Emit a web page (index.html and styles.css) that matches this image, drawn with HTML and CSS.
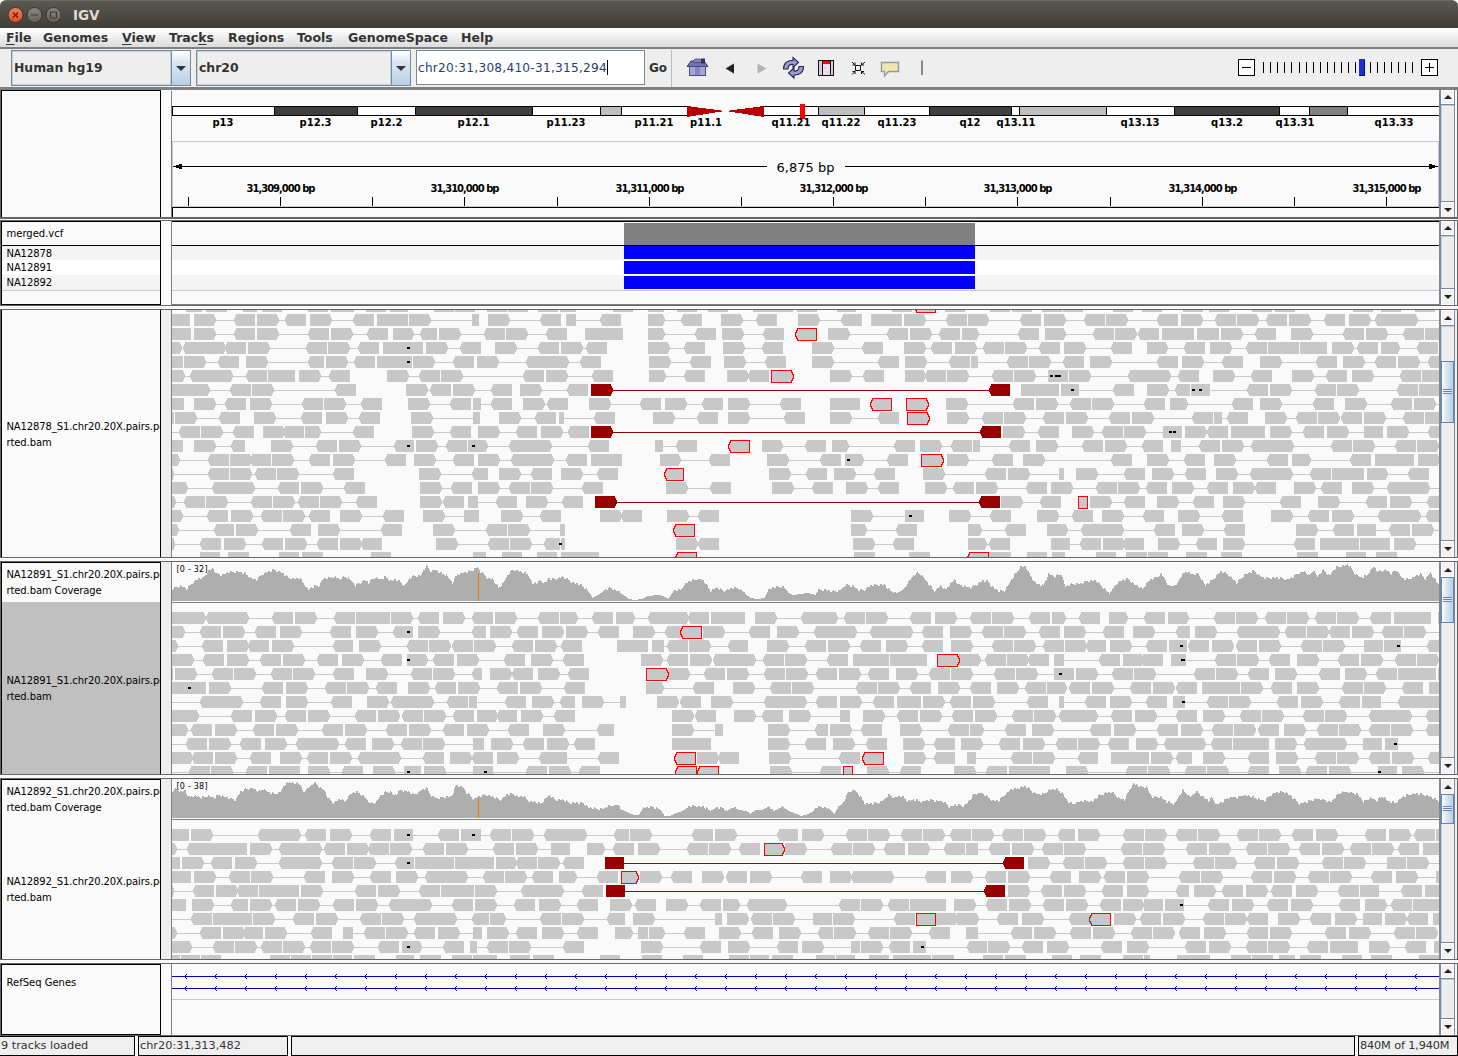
FILE: index.html
```html
<!DOCTYPE html>
<html lang="en">
<head>
<meta charset="utf-8">
<title>IGV</title>
<link rel="stylesheet" href="styles.css">
</head>
<body>
<header class="titlebar">
  <svg class="winbtns" width="60" height="28">
    <defs>
      <linearGradient id="gc" x1="0" y1="0" x2="0" y2="1"><stop offset="0" stop-color="#f48363"/><stop offset="1" stop-color="#df4a16"/></linearGradient>
      <linearGradient id="gg" x1="0" y1="0" x2="0" y2="1"><stop offset="0" stop-color="#8a8880"/><stop offset="1" stop-color="#62615a"/></linearGradient>
    </defs>
    <g stroke="#35342f"><circle cx="15.500" cy="14" r="7.500" fill="url(#gc)"/><circle cx="34.500" cy="14" r="7.500" fill="url(#gg)"/><circle cx="53.500" cy="14" r="7.500" fill="url(#gg)" /></g>
    <path d="M13 11.500l5 5M18 11.500l-5 5" stroke="#5c2413" stroke-width="1.300"/>
    <path d="M31 14h7M50.500 11h6v6h-6z" stroke="#3c3b37" stroke-width="1.200" fill="none"/>
  </svg>
  <span>IGV</span>
</header>
<nav class="menubar">
  <span class="m1"><u>F</u>ile</span><span class="m2">Genomes</span><span class="m3"><u>V</u>iew</span><span class="m4">Trac<u>k</u>s</span><span class="m5">Regions</span><span class="m6">Tools</span><span class="m7">GenomeSpace</span><span>Help</span>
</nav>
<div class="toolbar">
  <div class="combo genome"><span>Human hg19</span><i></i></div>
  <div class="combo chrom"><span>chr20</span><i></i></div>
  <div class="locus">chr20:31,308,410-31,315,294<b></b></div>
  <div class="go">Go</div>
  <svg class="icons" width="250" height="36" viewBox="680 50 250 36">
    <path d="M687 66.500L691 61h13l4 5.500z" fill="#7173ad" stroke="#3a3b70"/>
    <path d="M692 62l3-3h5l5 4z" fill="#8587bd" stroke="#3a3b70" stroke-width=".7"/>
    <rect x="701" y="58.500" width="4" height="5" fill="#33345e"/>
    <rect x="689.500" y="66.500" width="16" height="9" fill="#a3a5d6" stroke="#4a4c86"/>
    <rect x="695" y="67" width="5" height="8" fill="#8486bd"/>
    <path d="M725.500 68.500l8.500-5v10z" fill="#222"/>
    <path d="M766.500 68.500l-9-5v10z" fill="#b4b4b4"/>
    <g fill="#9b9dd2" stroke="#25264f" stroke-width="1.100">
      <path d="M783.500 69c0-6 4-9 9.500-8.500v-3l5.500 5-5.500 5v-3c-3-.5-5 1-5 4.500z"/>
      <path d="M803.500 66.500c0 6-4 9-9.500 8.500v3l-5.500-5 5.500-5v3c3 .5 5-1 5-4.500z"/>
    </g>
    <rect x="818.500" y="60.500" width="15" height="15" fill="#ccd0f2" stroke="#111"/>
    <path d="M822.500 60.500v15M830.500 60.500v15" stroke="#111"/>
    <rect x="823" y="64" width="7" height="11" fill="#f0dde8"/><rect x="823" y="61" width="7" height="3" fill="#f00"/>
    <path d="M820.500 63v3m0 3v3m12-8v3m0 4v3M825 67v2m2 2v2" stroke="#f6b5bb" stroke-width="1"/>
    <path d="M855.500 65.500h5v5h-5zM852 62l3 3m-2.500 0h2.500v-2.500M865 62l-3.500 3m2.500 0h-2.500v-2.500M852 74.500l3-3m-2.500 0h2.500v2.500M865 74.500l-3.500-3m2.500 0h-2.500v2.500" fill="none" stroke="#111"/>
    <path d="M881.500 62.500h17v9h-10l-4 4.500v-4.500h-3z" fill="#efe8ac" stroke="#999" stroke-width="1.400"/>
    <path d="M922 60.500v14.500" stroke="#555" stroke-width="1.300"/>
  </svg>
  <svg class="zoom" width="210" height="36" viewBox="1230 50 210 36" shape-rendering="crispEdges">
    <path d="M1238.500 59.500h16v16h-16zM1421.500 59.500h16v16h-16z" fill="#fff" stroke="#000"/>
    <path d="M1242 67.500h9M1425 67.500h9M1429.500 63v9" stroke="#000"/>
    <g id="zoomticks"></g>
    <rect x="1359" y="59" width="6" height="17" fill="#1a30d0"/><path d="M1364.500 60v15.500h-5" fill="none" stroke="#001080"/>
  </svg>
</div>
<main>
  <section class="panel p1">
    <div class="names"></div>
    <svg class="data" width="1267" height="127" viewBox="172 91 1267 127" id="ruler" shape-rendering="crispEdges"></svg>
    <div class="sb"><i class="up"></i><div></div><i class="dn"></i></div>
  </section>
  <section class="panel p2">
    <div class="names"><div class="vh">merged.vcf</div><div class="vr">NA12878</div><div class="vr w">NA12891</div><div class="vr">NA12892</div><div class="vend"></div></div>
    <svg class="data" width="1267" height="84" viewBox="172 221 1267 84" shape-rendering="crispEdges">
      <rect x="172" y="246" width="1268" height="44" fill="#f4f4f4"/><rect x="172" y="260" width="1268" height="15" fill="#fff"/>
      <path d="M172 221.500h1268M172 245.500h1268" stroke="#000"/><path d="M172 290.500h1268" stroke="#c8c8d2"/><path d="M172 304.500h1268" stroke="#808080"/>
      <rect x="624" y="223" width="351" height="22" fill="#808080"/>
      <path d="M624 246h351v13h-351zM624 261h351v13h-351zM624 276h351v13h-351z" fill="#00f"/>
    </svg>
    <div class="sb"><i class="up"></i><div></div><i class="dn"></i></div>
  </section>
  <section class="panel p3 al">
    <div class="names"><p class="n1">NA12878_S1.chr20.20X.pairs.po<br>rted.bam</p></div>
    <svg class="data" width="1267" height="247" viewBox="172 310 1267 247" id="a1" shape-rendering="crispEdges"></svg>
    <div class="sb"><i class="up"></i><div><em class="t1"></em></div><i class="dn"></i></div>
  </section>
  <section class="panel p4 al">
    <div class="names"><p class="cov">NA12891_S1.chr20.20X.pairs.po<br>rted.bam Coverage</p><p class="sel">NA12891_S1.chr20.20X.pairs.po<br>rted.bam</p></div>
    <svg class="data" width="1267" height="212" viewBox="172 562 1267 212" id="a2" shape-rendering="crispEdges"></svg>
    <div class="sb"><i class="up"></i><div><em class="t2"></em></div><i class="dn"></i></div>
  </section>
  <section class="panel p5 al">
    <div class="names"><p class="cov">NA12892_S1.chr20.20X.pairs.po<br>rted.bam Coverage</p><p class="n3">NA12892_S1.chr20.20X.pairs.po<br>rted.bam</p></div>
    <svg class="data" width="1267" height="180" viewBox="172 779 1267 180" id="a3" shape-rendering="crispEdges"></svg>
    <div class="sb"><i class="up"></i><div><em class="t3"></em></div><i class="dn"></i></div>
  </section>
  <section class="panel p6">
    <div class="names"><p class="ref">RefSeq Genes</p></div>
    <svg class="data" width="1267" height="71" viewBox="172 964 1267 71" id="genes" shape-rendering="crispEdges"></svg>
    <div class="sb"><i class="up"></i><div></div><i class="dn"></i></div>
  </section>
</main>
<footer class="status"><span class="s1">9 tracks loaded</span><span class="s2">chr20:31,313,482</span><span class="s3"></span><span class="s4">840M of 1,940M</span></footer>
<script src="tracks.js"></script>
</body>
</html>
```
FILE: styles.css
```css
* { box-sizing: border-box; }
body { margin: 0; width: 1458px; height: 1056px; overflow: hidden; background: #fafafa; font-family: "DejaVu Sans", sans-serif; color: #333; display: flex; flex-direction: column; }
svg { display: block; flex: none; }
.titlebar { height: 28px; flex: none; display: flex; align-items: center; background: linear-gradient(#5a5850, #3e3d38); border-top: 1px solid #6a6860; border-radius: 6px 6px 0 0; font: bold 13.5px "DejaVu Sans", sans-serif; color: #dfdbd2; }
.titlebar span { margin-left: 13px; }
.menubar { height: 19px; flex: none; display: flex; padding-left: 6px; background: linear-gradient(#fff, #dcdcdc); font-size: 12.5px; font-weight: bold; line-height: 19px; white-space: nowrap; }
.menubar u { text-underline-offset: 2px; }
.m1 { width: 37px; } .m2 { width: 79px; } .m3 { width: 47px; } .m4 { width: 59px; } .m5 { width: 69px; } .m6 { width: 51px; } .m7 { width: 113px; }
.toolbar { height: 43px; flex: none; display: flex; border-top: 2px solid #808080; border-bottom: 3px solid #808080; background: #eee; padding: 1px 18px 0 11px; }
.combo { height: 36px; display: flex; border: 1px solid #7a8a99; font-size: 12.4px; font-weight: bold; }
.combo span { flex: 1; border: 1px solid #b8cfe5; padding-left: 1px; height: 34px; line-height: 32px; }
.combo i { width: 19px; border-left: 1px solid #7a8a99; background: linear-gradient(#fff, #dde8f3 30%, #b8cfe5); display: flex; align-items: center; justify-content: center; }
.combo i::after { content: ""; border: 5px solid transparent; border-top-color: #333; border-bottom: 0; }
.genome { width: 180px; margin-right: 5px; }
.chrom { width: 215px; margin-right: 5px; }
.locus { width: 229px; height: 35px; border: 1px solid #7a8a99; background: #fff; font-size: 12.1px; letter-spacing: .27px; padding-left: 1px; color: #1f3b70; white-space: nowrap; display: flex; align-items: center; }
.locus b { width: 1px; height: 15px; background: #000; }
.go { width: 27px; height: 37px; border-right: 1px solid #bbb; font-size: 12px; font-weight: bold; line-height: 37px; text-align: center; }
.icons { margin-left: 8px; }
.zoom { margin-left: auto; }
main { display: flex; flex-direction: column; gap: 3px; height: 946px; flex: none; font-size: 10px; color: #000; }
.panel { display: grid; grid-template-columns: 160px 11px 1267px 17px; border: 1px solid #666; overflow: hidden; flex: none; background: #fafafa; }
.panel .data { grid-column: 3; box-shadow: -1px 0 #808080; background: #fafafa; }
.panel .names { grid-column: 1; border: 1px solid #000; overflow: hidden; white-space: nowrap; background: #fafafa; }
.panel .sb { grid-column: 4; }
.p1 { height: 129px; margin-bottom: -2px; border-bottom-width: 2px; border-top: 0; padding-top: 1px; }
.p1 .names, .p1 .sb { margin-top: -1px; }
.p2 { height: 86px; }
.p3 { height: 249px; } .p4 { height: 214px; } .p5 { height: 182px; } .p6 { height: 73px; }
.al { background: #eee; }
.al .names { border-bottom: 0; }
.p3 .names { border-top: 0; }
p { margin: 0; padding-left: 4.500px; line-height: 16px; letter-spacing: -.11px; }
.vh { height: 24px; line-height: 24px; padding-left: 4.500px; border-bottom: 1px solid #000; }
.vr { height: 15px; line-height: 16px; padding-left: 4.500px; letter-spacing: -.1px; background: #f4f4f4; }
.vr:nth-child(2) { height: 14px; }
.vr.w { background: #fff; }
.vend { border-top: 1px solid #c8c8c8; }
.n1 { padding-top: 109px; }
.cov { height: 39px; padding-top: 4px; letter-spacing: -.11px; }
.sel { height: 172px; padding-top: 71px; background: #c0c0c0; }
.n3 { padding-top: 55px; }
.ref { padding-top: 10px; letter-spacing: 0; }
.sb { display: flex; flex-direction: column; background: #eee; border: 1px solid #7a8a99; border-width: 0 1px 0 2px; margin-right: 1px; }
.sb i { height: 15px; flex: none; background: #f2f2f2; border: 1px solid #fff; display: flex; align-items: center; justify-content: center; }
.sb i.up { height: 14px; }
.al .sb i.up { height: 15px; }
.sb i.dn { height: 16px; padding-bottom: 1px; }
.sb i::after { content: ""; border: 4.500px solid transparent; }
.sb .up::after { border-bottom-color: #222; border-top: 0; }
.sb .dn::after { border-top-color: #222; border-bottom: 0; }
.sb div { flex: 1; border: solid #7a8a99; border-width: 1px 0; box-shadow: inset 1px 1px #b8cfe5; display: flow-root; }
.sb em { display: block; border: 1px solid #6382bf; background: linear-gradient(90deg, #fff, #dbe6f2 40%, #b8cfe5); position: relative; }
.sb em::after { content: ""; position: absolute; left: 1px; right: 1px; top: calc(50% - 3px); height: 5px; background: repeating-linear-gradient(#6382bf 0 1px, #e8f0f8 1px 2px); }
.t1 { height: 62px; margin-top: 35px; } .t2 { height: 46px; margin-top: -1px; } .t3 { height: 30px; margin-top: -1px; }
.status { height: 20px; flex: none; display: flex; gap: 3px; font-size: 11.300px; line-height: 18px; color: #333; }
.status span { height: 20px; border: 1px solid #000; background: #efefef; padding-left: 1px; white-space: nowrap; overflow: hidden; }
.s1 { width: 136px; margin-left: -1px; } .s2 { width: 150px; } .s3 { width: 1064px; } .s4 { flex: 1; letter-spacing: -.15px; }
svg text { font-family: "DejaVu Sans", sans-serif; font-size: 10px; }
svg .bold { font-weight: bold; text-anchor: middle; }
svg .span { font-size: 13px; text-anchor: middle; }
svg .range { font-size: 8px; }
```
FILE: tracks.js
```js
// Token grammar for a row of reads:
//   r = points right, l = points left, b = both ends, f = flat, s/e = off the left/right edge, k = mismatch
//   "-" joins mates, R = red outline, D = dark red; number is x, ":n" is the width
const rows1 = [
'f186:16 f206:21 f243:14 f262:20 f308:20 f331:23 f366:20 f390:18 f434:20 f455:20 f487:20 f508:20 f538:20 f560:16 f613:20 f648:16 f677:20 f708:20 f753:20 f773:20 f797:20 f837:19 f892:20 Rl914 f945:20 f990:20 f1012:20 f1042:20 f1063:20 f1113:20 f1142:20 f1183:20 f1209:20 f1252:20 f1275:20 f1353:20 f1381:20 f1415:20',
'f172:18 r194-l234 r257-l285 r310-l353 f377:31 r409-f472:7 r488-l540 f566:10-l600 r648:17-l681 r721-l756 r798-l841 f871:31 r904-l946 r968:21-l1020 r1044-l1084 r1106-l1157 r1181-l1215 r1237-l1266 r1289-l1324 r1349-b1375-e',
'f172:19 r194-l234 r257-l308 r331-l367 r393:21-l420:17 r439-l484 r506-l546 f585:38 r648:17-l695 r722-l763 Rl795 r828-l887 r910-l939 r962:17-l1018 r1045:21-l1093 r1115-l1138 f1162:32 f1197:22 r1221-l1255 r1291-l1343 r1366-l1403 f1425:14',
'r172:10 b183 l225 r248-l306 r328-l358 f383:21 f404:19 k407 r426-l460 r495-l538 r561-l586 r648-l684 r723-l762 r812-l862 r904-l931 r955-l983 r1005-l1039 r1064-l1111 r1147:21-l1184 r1210-l1246 f1268:31 f1300:27 r1332-l1357 r1381:19-l1417',
'f172:11 r184-l218 r246-l308:16 r326-l354 f377:35 k407 r413-l453 r477-b526-l580 r649-l690 r724-l765 r812-l878 r905-l949 f971:7-l1007 r1029-l1063 r1090-l1157 r1182-l1222 r1260-l1316 r1343-l1375 r1398-l1428:11',
'r172:13-b190-l246 f268:27 r299-l329 r387-l419 r441-l523 r546-l592 r649:17-l684 r727 l748 Rr771 r830-l863 r905:21 l925 r947-l992 r1014-f1048:20 k1050 k1055:6 r1069-b1128-l1178 r1213-l1251 r1292-l1326 r1352-l1400 f1422:17',
'r172:38-l230 r252-l335 r406-l430 r453-l491 r520-l567 Dr591-Dl989 f1021:38 f1061:18 k1071-l1113 r1147-l1175:15 f1191:19 k1192 k1199-l1247 r1270-l1315 r1337-l1397 f1419:20',
'f172:12 r194-l225 r250-l302 r324-l361 r408-l450 f473:8-l491 r523-l547 r589-l640 r665-l702 r728-l780 f830:30 Rl870 Rr906 r946-l1013 r1036-l1070 r1092-l1144 r1170:18-l1232 r1260-l1313 r1345-l1391 r1414-e',
'f172:2 r175-l219 r254-l301 r326-l359 r411-f473:7 r499-l535 f559:5-l594 r653-l697 r728-l784 r830-l878 Rr907 r947-l982 r1004-l1043 r1066-l1109 r1132-l1192 f1214:8-l1227 r1265-l1296 r1318 l1341 r1364-l1403 f1425:14',
's172-l179 r201-l233 r263 l283 r305:16-l353 r412-l450 r478-l516 r541-l568 Dr591-Dl980 r1003-l1038 r1072-l1102 r1124-f1163:19 k1169 k1173 r1185 l1207 f1231:34 r1270-l1303 r1327-f1364:19 r1387-l1428:11',
'f172:11 r194-l231:14 r271-l316 r339-l394:20 k407 r416-l446 r468:20 k472-b509-l588 f655:8-l676 Rl728 r762:21-l805 r832:17-l894 r920-l951 f973:7-l1009 r1036-l1082 r1105-l1142 f1171:10-l1199 r1222-b1251-l1331 r1353-l1395 r1417',
'r172:8-l208 r230 l250 r272-l309 r333-l385 r414-l453 r478-b511-l566 f591:31 r660:21-l709 r767-l820 r845:19 k847-l887 Rr921 r947-l992 r1023-l1111 r1147-l1184 r1214-l1267 r1292:19-l1350 f1375:39 r1418',
'r172:2-l208 r230-l255 r277-l333 r419-l472:16 r499-l531 r561-l597 Rl664:19 r769-l806 r834-l874 r923-l985 r1008-f1059:5 r1076-l1124 r1152-l1185 r1216-b1250-l1310 f1332:32 r1367:21-l1408',
'r172:16-b212-l278 r301-l344 r420-l451 r478-l509 r531-l582 r666-l710 r772-l812 r846-l878 r925-l953 r976-l1026 r1051-l1096 r1118-l1146 r1172-l1207 r1233 l1255 r1294-l1321 r1352-b1387-e',
'r172:4-l184 r206-l251 r273-l298 r320-l356 r420-l443 f468:10-l496 r526-l562 Dr595-Dl979 r1001-l1040 Rf1078:9 r1090-l1124 r1157-l1193 r1223-l1280 r1318-l1366 r1390-l1427:12',
'r172:11-l207 r231-l261 r283-l309 r340-l383 r423-f464:15 r501-l540 r600 l621 r667-l698 r851-f905:19 k909 r949-l990 r1037-l1072 r1102-l1143 r1178-l1222 r1271-l1308 r1332-b1378-l1426:13',
'r172:7-l214:20 r236-l290 r318-l381 r433-l486 r508-f560:5 Rl673 r851:16-l896 r968:14-l1005 r1047:21-b1081-l1154 r1182-l1224 r1296-l1333 f1357:19-l1389 r1412-e',
'r172:3-l200 r224-l262 r285-l317 r340 l361 r436-l488 r510-l544:16 f561:4 k559 r676 l698 r853-l893 r968:19-l989 f1051:19-l1080 r1103 l1123 r1158-l1196 r1223-l1294 f1320:39 f1360:30 r1394-e',
'f200:20 f228:21 f279:20 f302:21 f371:20 f473:13 f502:20 f537:20 f561:38 Rl675 f854:21 f909:21 Rl967 f989:22 f1027:20 f1052:13 f1096:20 f1126:21 f1148:20 f1186:21 f1221:21 f1297:21 f1346:20 f1376:21'];
const rows2 = [
'r172:34 b206-l272 r295-l334 f356:34 r391-l418 r443-l472 r495-l538 r560:18-l592 r616:19-b648:41 l688 f711:34 r755-b801:37-l844 r866-l910 r935-l970 r992-l1029 r1052:14-l1079 r1109:19-l1144 r1168:21-l1214 r1236-l1265 r1287-l1315 r1337-l1370 f1394:37 f1438:2',
'r172:13-l200 r223-l255 r280-l330 r356-l393:20 k407 r418-l472:14 r490-l517 r542 r566-l598 r633-l665 Rl680 r703-l749 r777-b814-b870-l922 r950-l982 r1004-l1039 r1064-l1103 r1133-l1176:14 r1195-b1237-l1285 r1307 l1329 r1352-l1382 r1404-e',
'r172:6-l202 r227 l248 r272-l333:20 r359-l407 r429 l452 r474-l512 r535-l561 f617:31 f652:12-l667 r689-l728:20 r767-l805 r828-l860 r886-l922 r951-l992 r1014-l1043 r1065 l1086:20 r1110-l1146 f1169:18 k1180 l1188 r1212 l1236 r1259-l1301 r1323-f1364:19 f1384:17 k1397-l1427:12',
'r172:22-l203 r227-l260 r283-l317 r342-l381 r407:21 k407-l433 r457-l504 r531-l563 r641-l667 r690 b713-l763 r785-l827 f853:36 f890:37 Rr937 r959-l985 r1007 l1028 f1054:10-l1099 r1123:21 f1143:20 f1171:15 k1181:4-l1215 r1237-l1269 r1297-l1338 r1361-l1395 r1417',
'f172:1 r175-l212 r234-l271 r293-l333 r366-l411 r433-l472:10 r490 l512 r538-l568 Rr646 r668-l704 r727-l764 r786-l816 r839-l868 r896-l929 r951-l994 r1016-f1054:20 k1059 r1076-l1112 r1134-l1194 r1216-l1248 r1275-l1319 r1345-l1376 f1398:38 f1438:2',
'f172:34 k188 r209-l262 r286-l325 r347-l376 r408-l435 r458-l497 r520-l564 r646:18-l693 r733-l770 r792-l856 r878-l910 r938-l970 r997-l1025 r1047:20 l1069 r1092-l1130 r1153 l1176 f1202:38 r1241-l1271 r1297-l1342 r1364-l1402 f1429:11',
's172-b200-l260 r286-l331 r367-b391-l447 f469:8-l505 r532-l560:15 r582-f620:6 r657 l680 r711-b764-l816 r840-l873 f897:24 r923-l950 r973-l1027 f1059:5-l1085 r1110-l1146 f1173:12 k1182-l1207 r1229-l1277 r1301-l1339 f1362:19-l1398:42',
'r172:27-l231 r255-l285 r308-l355 r378 l402 r424-l453 r477:21 l497:20 r521-l554 r672 l695 r734-l762 r789-f840:10 r863-l897 r920-l952 r975-l1012 r1034-b1059:39-l1111 r1135-l1176 r1203-l1240 r1262-l1303 r1325-b1369-l1426:14',
'r172:16-l191 r215-l253 r276-l322 r345-l386 r409-l443 r467-l508 r543-l597:17 r672-f715:8 r768-l815:13 r830-l861 r900-l948 r970:14-l1005 r1032-l1090 r1114-l1157 r1181-l1212 r1234 l1258 r1284-l1317 r1339-l1369 r1391-l1426:14',
's172-l186 r209-l240 r265-b296-l345 r372-l401 r423-f473:11 r491-l523 r547-l574 f672:39 r768-l805 r833-l866 r903-l934 r961-l999 r1023-l1056 r1078-l1108 r1136-b1164:42-l1211 f1233:36 r1275-b1304-f1363:19 f1385:13 k1394-e',
'r172:21 l192 r215-l250 r280-l307 r330-b358-l423 r450 l472 r497-l539:28-l598 Rl674 r697 l718 r769-l839 Rl862 r904-l934 f967:9-l1011 r1033-l1078:20 f1111:38 r1151-l1176:16 r1203-l1248 r1276-l1315 r1337-l1369 r1392-l1428:11',
's172-l189 r211-l246 f269:31 r308-l342 r373-f404:17 k407 r424-f473:20 k484-l526 r549-l579 Rl675 Rl697 r770-l820 Rf843:9 r867-l900 r954-l986 f1009:41 r1066-l1126 r1148-l1185 r1207-l1248 r1279-l1306 r1329-f1378:19 k1378 r1402-e'];
const rows3 = [
'f172:17 r191-b258-l305 r330-l370 f394:19 k407-l438 f461:20 k472-l490 r512-b544-l614:15 r630-l692 r715-l777 r802-l846 r868-l901 r923-l950 r972-l1002 r1024-l1058:17 r1078-l1123 r1145-l1176 r1198-l1237 r1259-l1292 r1316-l1365 r1389-l1414 f1436:4',
'r172:5-l187:60 r250-b279-l324 r347 l368 r390-l423 r446-l493 r516-f551:19 r587:18-l613 r638-l687 r709-l739 Rr764:20 r785-l831 r853-l884 r908-l944 f966:12-l989 r1012-l1042 r1064-l1121 r1143-l1186 r1209-l1246 r1268-l1299 r1322-l1350 r1372-l1398 f1423:17',
'f172:8 r182-l211 r235-b279-l332 r354-l395:19 k407 f415:39 f455:39 r496:21 l516 r538-l563 Df605:19-Dl1003 r1028-l1063 r1085-l1123 r1145-l1193 r1215-l1254 r1277-l1322 r1344-f1387:19 r1407-e',
'f172:19 r194-l229 r251-l304 r332-l370 r396-b425-l483 r505-l532 r559:18-l597 Rr621:17 r640-l671 r702 l726 r750-l801 r830 l851 r872-l925 r951-l985 r1008-l1050 r1079-l1104 r1127-l1179 r1201-l1251 r1274-l1308 r1330-l1371 r1396-f1436:4',
'r172:2-l193 r216 l237 f259:40 r301-l355 r378-l419 f441:33 r475-b521-l582 Df606:19-Dl984 r1008-l1041 r1064-l1102 r1127-l1176:13 r1194-l1222 r1246-l1271 r1296-l1338 f1360:19-l1401 f1425:15',
'f172:14 r192-l231:17 r250-l275 r298-l333 r356-b389-l452 r475-l514 r539-l577 r610-l635 r666-l700 r723:17-b747:40-l839 r861-l888 f910:36 r954-l986 r1009-l1043 r1066-l1100 r1123:21 f1144:19 f1165:19 k1180-l1208 r1232-l1267 r1291-l1339 r1365-l1391 f1413:27',
's172-l191 f213:39 r253-l293 r316-l360 r382-b414-l472:17 r490:16-l540 r562-l607:18 r633-f715:7 r727 l751 r773-f813:19 r833-l894 Rf916:19 r936 r957-l997 r1022-l1069 Rl1089 r1114-l1140 r1163-l1203 r1225-l1247 r1278-l1310 r1335-f1363:19 r1385 l1407 f1433:7',
'r172:5-l200 r223 l243:20 r265-l311 f343:10-l364 r386-l414 r438-f473:9 r487-l516 r542-l577 r615:18-f638:10 r649:16-l684 r719-l752 r779-l818:15 r834-l868 r890-l929 f966:12-l1011 r1034-l1070 r1093-l1131 r1153 l1179 r1204-l1247 r1270-l1325 r1349-l1394 r1416',
'r172:20-l213 r235-l261 r283-l310 r332-l378 r402:20 k407-l443 f470:7-l487 r509-l563 r641-l700 r728-l777 r802-f851:9 r861-l889 f913:13 k921-l967:20 r988-l1022 r1047-l1101 r1127-l1185 r1209-l1246 r1268-l1307 f1330:28 r1369:21-l1405 f1434:6',
'f172:8 f181:19 f201:20 f270:20 f291:20 f312:20 f333:19 f354:21 f396:18 f420:21 f452:20 f473:24 f510:20 f533:21 f600:20 f642:20 f683:20 f729:20 f750:19 f772:21 f816:19 f836:19 f869:20 f893:38 f932:22 f983:20 f1005:21 f1052:20 f1080:21 f1123:20 f1144:6 f1177:33 f1231:20 f1252:21 f1279:16 f1300:21 f1342:20 f1371:21 f1419:20'];

// Coverage profiles: x, depth in pixels
const cov2 = '172 12 180 15 186 12 192 18 198 22 203 23 208 30 212 32 216 27 222 26 230 29 238 29 245 27 250 23 256 21 262 27 268 29 274 31 280 29 288 23 294 22 299 23 303 18 308 11 313 14 318 15 323 22 328 23 335 24 339 21 344 24 348 23 355 15 360 18 364 21 368 18 375 24 380 21 385 24 390 20 395 21 400 19 404 15 409 22 414 25 420 25 426 35 430 30 434 31 440 28 446 26 452 18 457 27 465 28 471 30 477 34 480 29 484 26 488 22 492 22 498 13 502 17 508 27 512 31 517 30 523 28 528 26 532 17 536 18 540 20 545 18 548 22 555 22 562 24 568 21 573 18 580 16 586 12 592 3 598 6 603 10 610 13 617 10 622 7 628 2 634 1 642 2 648 5 657 6 663 5 668 2 673 10 680 11 685 17 692 21 700 22 704 19 710 10 716 13 723 10 730 12 738 13 745 7 750 3 757 2 764 3 768 11 775 14 783 14 788 8 793 6 800 7 807 8 815 6 818 11 825 11 832 9 840 11 846 16 852 15 858 11 864 11 870 15 877 16 884 16 890 10 897 8 903 11 908 19 914 26 918 28 922 25 928 17 934 10 940 15 945 11 950 17 954 21 958 16 964 15 970 13 976 16 982 20 987 20 992 14 997 10 1004 10 1008 16 1013 24 1020 34 1025 34 1030 25 1036 17 1043 15 1048 27 1054 24 1061 27 1065 14 1073 17 1080 17 1087 20 1095 20 1102 14 1109 7 1114 15 1120 20 1128 22 1133 17 1142 12 1148 20 1155 23 1161 27 1168 15 1176 16 1181 25 1186 30 1192 26 1198 27 1205 15 1212 21 1220 29 1227 27 1236 18 1244 26 1254 30 1262 23 1270 23 1280 23 1287 21 1293 24 1298 28 1304 29 1309 25 1313 31 1317 24 1323 31 1329 25 1335 33 1342 35 1348 36 1353 29 1360 23 1366 25 1373 34 1378 29 1385 31 1391 27 1396 31 1402 22 1408 22 1414 24 1420 27 1425 22 1430 28 1436 19 1440 16';
const cov3 = '172 27 176 29 180 26 185 27 188 21 195 22 201 20 208 22 214 20 219 23 225 21 230 19 235 18 240 26 246 29 252 30 258 26 263 29 268 25 274 24 280 26 284 33 290 36 294 34 298 35 303 26 308 30 314 35 319 31 324 27 328 19 333 15 340 19 344 16 350 24 357 26 363 22 370 14 376 16 380 22 386 26 390 26 394 22 400 28 408 26 413 23 420 27 426 30 431 22 437 19 444 21 451 21 456 33 462 31 466 25 473 19 478 21 486 23 492 21 500 18 506 23 512 24 518 21 523 22 528 17 534 16 540 14 545 19 549 22 555 18 562 18 570 15 576 15 583 15 588 10 596 9 604 9 608 12 617 13 622 8 628 5 634 3 638 3 643 10 650 11 656 10 660 8 664 2 670 2 676 5 682 7 688 11 695 12 703 11 710 7 716 10 722 10 727 7 732 11 738 8 746 7 750 4 755 8 762 8 768 11 773 7 782 11 788 7 796 4 801 2 808 4 812 6 816 11 823 11 830 8 834 4 838 11 843 15 848 26 854 28 859 22 865 14 872 14 878 15 884 18 888 23 894 20 901 22 907 17 915 18 922 16 929 18 936 17 943 16 949 11 956 13 963 12 968 16 974 24 980 25 986 22 992 17 998 17 1004 23 1010 28 1016 29 1021 31 1027 31 1032 26 1038 23 1044 24 1049 28 1055 29 1062 25 1067 16 1072 14 1078 16 1085 17 1092 16 1098 22 1105 25 1111 26 1118 20 1124 18 1130 30 1133 34 1140 31 1146 31 1151 21 1160 21 1166 16 1174 14 1179 22 1182 28 1190 21 1196 26 1203 21 1208 17 1212 20 1216 13 1222 16 1229 21 1237 20 1243 23 1251 21 1258 19 1264 17 1270 23 1278 26 1285 26 1292 20 1299 14 1307 16 1315 19 1323 18 1331 16 1337 23 1342 26 1350 25 1357 24 1363 16 1370 20 1376 17 1382 22 1388 16 1395 15 1401 20 1407 23 1413 24 1420 24 1427 22 1432 20 1440 16';

const widths = { r: 22, l: 21, b: 43, f: 10, s: 0, e: 0, k: 3 };
function shape(t, x, y, w, h) {
  const L = (t === 'l' || t === 'b') ? 2.5 : 0, R = (t === 'r' || t === 'b') ? Math.min(2.5, w / 2) : 0, m = h / 2;
  return `M${x + L} ${y}H${x + w - R}` + (R ? `L${x + w} ${y + m - 1}v2L${x + w - R} ${y + h}` : `V${y + h}`) +
    `H${x + L}` + (L ? `L${x} ${y + m + 1}v-2z` : 'z');
}
function drawReads(rows, y0) {
  let grey = '', dark = '', red = '', black = '', line = '', dline = '';
  rows.forEach((row, i) => {
    const y = y0 + 14 * i;
    let end = 172;
    for (const m of row.matchAll(/(-?)([RD]?)([rlbfsek])(\d*)(?::(\d+))?/g)) {
      const t = m[3], x = t === 'e' ? 1440 : +m[4], w = m[5] ? +m[5] : widths[t];
      if (t === 'k') { black += `M${x} ${y + 5}h${w}v2h-${w}z`; continue; }
      if (m[1]) { const s = `M${end} ${y + 6}H${x}v1H${end}z`; if (m[2] === 'D') dline += s; else line += s; }
      if (w) {
        if (m[2] === 'D') dark += shape(t, x, y, w, 12);
        else if (m[2] === 'R') red += shape(t, x + .5, y + .5, w, 12);
        else grey += shape(t, x, y, w, 12);
      }
      end = x + w;
    }
  });
  return `<path d="${line}" fill="#c8c8c8"/><path d="${dline}" fill="#960000"/><path d="${grey}" fill="#c8c8c8"/><path d="${dark}" fill="#960000"/><path d="${red}" fill="#c8c8c8" stroke="#f00"/><path d="${black}" fill="#000"/>`;
}
function drawCoverage(data, base, label, snp) {
  const v = data.split(' ').map(Number);
  let d = `M172 ${base}`, k = 0;
  for (let x = 172; x < 1440; x++) {
    while (k + 4 < v.length && x >= v[k + 2]) k += 2;
    const f = (x - v[k]) / (v[k + 2] - v[k]);
    const ripple = v[k + 1] > 8 ? [0, .8, -.6, 1.3, .1, -.9, .5][(x >> 1) % 7] : 0;
    d += `V${base - Math.max(1, Math.round(v[k + 1] + f * (v[k + 3] - v[k + 1]) + ripple))}h1`;
  }
  return `<path d="${d}V${base}z" fill="#aeaeae"/><rect x="478" y="${base - snp}" width="1" height="${snp}" fill="#e08000"/>` +
    `<path d="M172 ${base + 1.5}h1268" stroke="#808080"/><text class="range" x="176.500" y="${base - 29}" textLength="31">${label}</text>`;
}
const $ = id => document.getElementById(id);
$('a1').innerHTML = drawReads(rows1, 300);
$('a2').innerHTML = drawReads(rows2, 612) + drawCoverage(cov2, 601, '[0 - 32]', 28);
$('a3').innerHTML = drawReads(rows3, 829) + drawCoverage(cov3, 818, '[0 - 38]', 20);

// Ideogram and ruler
const bands = [[172,274,'#fff'],[274,357,'#3f3f3f'],[357,415,'#fff'],[415,532,'#3f3f3f'],[532,600,'#fff'],[600,621,'#bfbfbf'],[621,687,'#fff'],[763,818,'#fff'],[818,864,'#bfbfbf'],[864,929,'#fff'],[929,1011,'#3f3f3f'],[1011,1019,'#fff'],[1019,1106,'#bfbfbf'],[1106,1174,'#fff'],[1174,1279,'#3f3f3f'],[1279,1309,'#fff'],[1309,1347,'#808080'],[1347,1441,'#fff']];
const bandNames = [[223,'p13'],[315.500,'p12.3'],[386.500,'p12.2'],[473.500,'p12.1'],[566,'p11.23'],[654,'p11.21'],[706,'p11.1'],[791,'q11.21'],[841,'q11.22'],[897,'q11.23'],[970,'q12'],[1016,'q13.11'],[1140,'q13.13'],[1227,'q13.2'],[1295,'q13.31'],[1394,'q13.33']];
let s = bands.map(b => `<rect x="${b[0] + .5}" y="106.500" width="${b[1] - b[0]}" height="9" fill="${b[2]}" stroke="#000"/>`).join('');
s += '<path d="M687 106v11l38-6zM764 106v11l-38-6z" fill="#b40000"/><rect x="800" y="104" width="5" height="15" fill="#f00"/>';
s += bandNames.map(b => `<text class="bold" x="${b[0]}" y="126">${b[1]}</text>`).join('');
s += '<path d="M172.500 206V141.500H1439M172 206.500h1267M1438.500 142v64" stroke="#c8c8d2" fill="none"/><path d="M173 166.500H767M845 166.500H1438M172 207.500h1268M172.500 207v11" stroke="#000"/><path d="M173 166.500l9-3v6zM1438 166.500l-9-3v6z"/><path d="M172 217.500h1268" stroke="#808080"/>';
s += '<text class="span" x="805.500" y="171.500" textLength="58">6,875 bp</text>';
for (let i = 0; i < 14; i++) {
  const x = Math.floor(188.300 + i * 92.180);
  s += `<path d="M${x + .5} 197v9" stroke="#000"/>`;
  if (i % 2) s += `<text class="bold" x="${x + 1}" y="192" textLength="69">31,3${String((i - 1) / 2 + 9).padStart(2, '0')},000 bp</text>`;
}
$('ruler').innerHTML = s;

// Two transcripts on the reverse strand
let g = '';
for (const y of [976, 988]) {
  g += `M172 ${y}h1268v1h-1268z`;
  for (let x = 185; x < 1440; x += 30) g += `M${x} ${y - 1}h1v3h-1zM${x + 1} ${y - 2}h1v1h-1zM${x + 1} ${y + 2}h1v1h-1z`;
}
$('genes').innerHTML = `<path d="${g}" fill="#0000b4"/><path d="M172 999.500h1268" stroke="#c8c8d2"/>`;

let z = '';
for (let i = 0; i < 22; i++) z += `M${Math.round(1263 + i * 7.100) + .5} 62v11`;
$('zoomticks').innerHTML = `<path d="${z}" stroke="#000"/>`;
```
